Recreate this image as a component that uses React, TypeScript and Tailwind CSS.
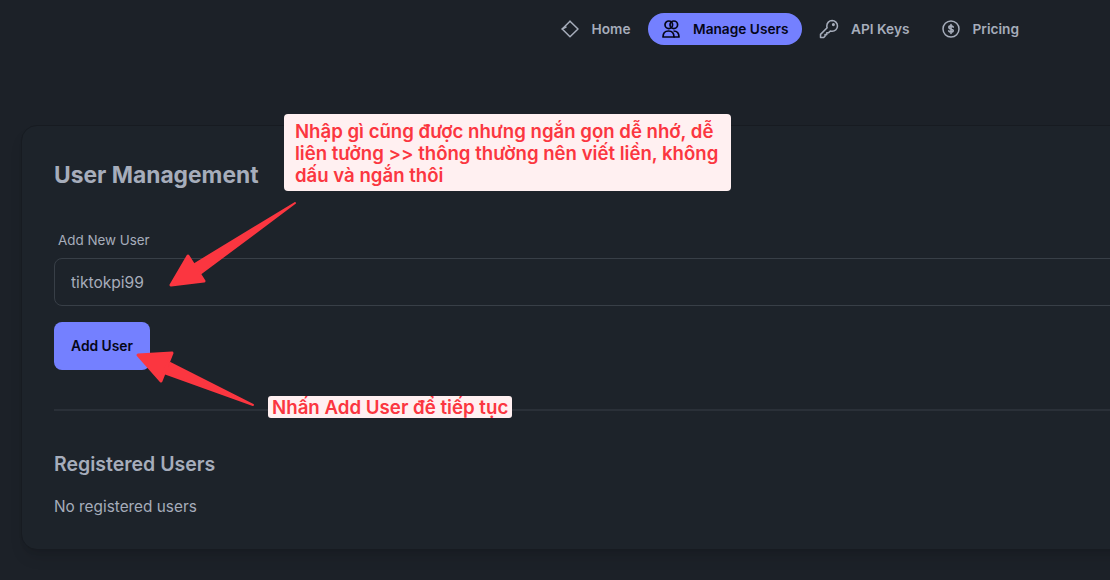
import React from "react";

const Diamond = () => (
  <svg width="20" height="20" viewBox="0 0 20 20" fill="none" stroke="currentColor" strokeWidth="1.5" strokeLinejoin="round" strokeLinecap="round">
    <path d="M10 2.200 18 10 10 17.800 2.200 10 6 8" />
    <path d="M2.200 10 10 2.200" />
  </svg>
);
const Users = () => (
  <svg width="20" height="20" viewBox="0 0 20 20" fill="none" stroke="currentColor" strokeWidth="1.7" strokeLinejoin="round">
    <circle cx="7.800" cy="5.800" r="3.800" />
    <circle cx="12.800" cy="5.800" r="3.800" />
    <path d="M2 18c0-3.800 2.200-6 5.500-6s5.500 2.200 5.500 6z" />
    <path d="M12.500 12c3.400 0 5.500 2.200 5.500 6h-5.500" />
  </svg>
);
const Key = () => (
  <svg className="-mx-px" width="22" height="22" viewBox="0 0 20 20" fill="none" stroke="currentColor" strokeWidth="1.400" strokeLinejoin="round" strokeLinecap="round">
    <path d="M12.800 2.300a4.900 4.900 0 0 1 0 9.800c-.6 0-1.100-.1-1.600-.3l-1.700 1.700H8v1.600H6.400v1.500L5 17.800H2.300v-2.900l6-6c-.2-.5-.3-1-.3-1.700a4.900 4.900 0 0 1 4.800-4.900z" />
    <circle cx="14" cy="6" r="0.700" fill="currentColor" />
  </svg>
);
const Dollar = () => (
  <svg width="20" height="20" viewBox="0 0 20 20" fill="none" stroke="currentColor" strokeWidth="1.500" strokeLinecap="round">
    <circle cx="10" cy="10" r="8" />
    <path strokeWidth="1.700" d="M12.200 8c-.4-.7-1.100-1.100-2.200-1.100-1.200 0-2.100.5-2.100 1.500 0 2.300 4.300 1 4.300 3.200 0 1-.9 1.500-2.200 1.500-1.100 0-1.900-.4-2.300-1.200M10 5.700v8.600" />
  </svg>
);

function NavItem({ icon, label, active }: { icon: React.ReactNode; label: string; active?: boolean }) {
  return (
    <div className={active
      ? "flex h-8 items-center gap-3 rounded-full bg-[#7480ff] px-[13.500px] text-[#050617]"
      : "flex h-8 items-center gap-3 rounded-full px-[13px] text-[#a6adbb]"}>
      {icon}
      <span className="text-[13.700px] font-semibold">{label}</span>
    </div>
  );
}

export default function App() {
  return (
    <div className="relative h-[580px] w-[1110px] overflow-hidden bg-[#1c2128] font-['Inter',sans-serif]">
      <nav className="flex h-[58px] items-center justify-end gap-1 pr-[78px]">
        <NavItem icon={<Diamond />} label="Home" />
        <NavItem icon={<Users />} label="Manage Users" active />
        <div className="mr-px">
          <NavItem icon={<Key />} label="API Keys" />
        </div>
        <NavItem icon={<Dollar />} label="Pricing" />
      </nav>

      <main className="ml-[21px] mt-[67px] h-[425px] w-[1200px] rounded-2xl border border-[#171b21] bg-[#1d232a] px-8 pt-[33px] shadow-lg">
        <h1 className="text-[22.800px] leading-8 font-bold text-[#a6adbb]">User Management</h1>
        <label className="ml-1 mt-[39px] block text-[13.400px] leading-5 text-[#a6adbb]">Add New User</label>
        <input
          readOnly
          value="tiktokpi99"
          className="mt-2 block h-12 w-full rounded-lg border border-[#383f47] bg-transparent px-4 text-[15.600px] text-[#a6adbb] outline-none"
        />
        <button className="mt-4 h-12 w-24 rounded-lg bg-[#7480ff] text-[13.800px] font-semibold text-[#050617]">Add User</button>
        <div className="mt-[39px] h-0.5 w-full bg-[#2a3038]" />
        <h2 className="mt-[39px] text-[19.500px] leading-7 font-semibold text-[#a6adbb]">Registered Users</h2>
        <p className="mt-[17px] text-[15.350px] leading-6 text-[#a6adbb]">No registered users</p>
      </main>

      <div className="absolute left-[284px] top-[114px] w-[447px] rounded-[4px] bg-[#fff0f1] px-[11px] pt-[6px] pb-[5px] text-[18.600px] leading-[22px] font-semibold text-[#fb3640]">
        Nhập gì cũng được nhưng ngắn gọn dễ nhớ, dễ liên tưởng &gt;&gt; thông thường nên viết liền, không dấu và ngắn thôi
      </div>
      <div className="absolute left-[268px] top-[396px] h-[22px] rounded-[3px] bg-[#fff0f1] px-1 pt-px text-[18.700px] leading-[22px] font-semibold whitespace-nowrap text-[#fb3640]">
        Nhấn Add User để tiếp tục
      </div>

      <svg className="absolute left-0 top-0" width="1110" height="580" fill="#fb3640" stroke="#fb3640" strokeLinejoin="round" strokeLinecap="round">
        <path d="M295 203 L193 265 L200 274 Z" strokeWidth="2" />
        <path d="M188 256 L171 285 L204 281 Z" strokeWidth="3" />
        <path d="M253 405 L170 363 L164 373 Z" strokeWidth="2" />
        <path d="M138 355 L172 353 L161 381 Z" strokeWidth="3" />
      </svg>
    </div>
  );
}
